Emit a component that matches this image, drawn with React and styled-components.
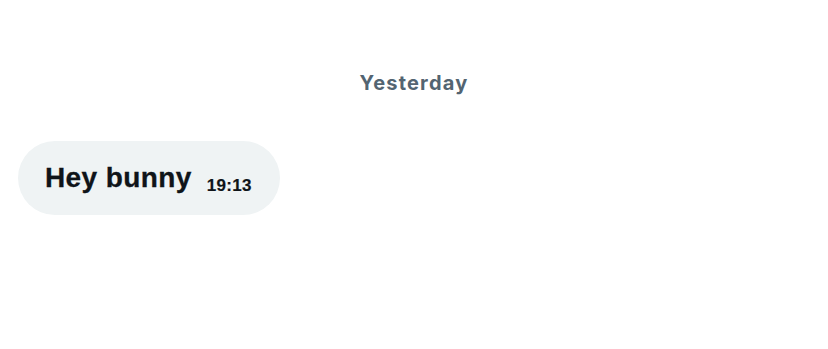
import * as React from "react";
import styled, { createGlobalStyle } from "styled-components";

const GlobalStyle = createGlobalStyle`
  html, body {
    margin: 0;
    padding: 0;
    background: #ffffff;
  }
  body {
    font-family: "Liberation Sans", Arial, sans-serif;
  }
`;

const Thread = styled.div`
  display: flex;
  flex-direction: column;
  padding: 71px 18px 0;
  width: 828px;
  box-sizing: border-box;
`;

const DayDivider = styled.div`
  text-align: center;
  font-family: Inter, "Liberation Sans", sans-serif;
  font-size: 20px;
  line-height: 24px;
  font-weight: 700;
  letter-spacing: 1.2px;
  color: #536471;
  margin-bottom: 46px;
`;

const Bubble = styled.div`
  align-self: flex-start;
  display: flex;
  align-items: flex-end;
  gap: 15px;
  padding: 21px 28px 21px 27px;
  background: #eff3f4;
  border-radius: 37px;
  color: #0f1419;
`;

const MessageText = styled.span`
  font-size: 28px;
  line-height: 32px;
  font-weight: 700;
  letter-spacing: 0.4px;
  -webkit-text-stroke: 0.3px #0f1419;
`;

const Time = styled.span`
  font-size: 17px;
  line-height: 17px;
  font-weight: 700;
  letter-spacing: 0.3px;
  -webkit-text-stroke: 0.2px #0f1419;
`;

const App = () => {
  return (
    <>
      <GlobalStyle />
      <Thread>
        <DayDivider>Yesterday</DayDivider>
        <Bubble>
          <MessageText>Hey bunny</MessageText>
          <Time>19:13</Time>
        </Bubble>
      </Thread>
    </>
  );
};

export default App;
